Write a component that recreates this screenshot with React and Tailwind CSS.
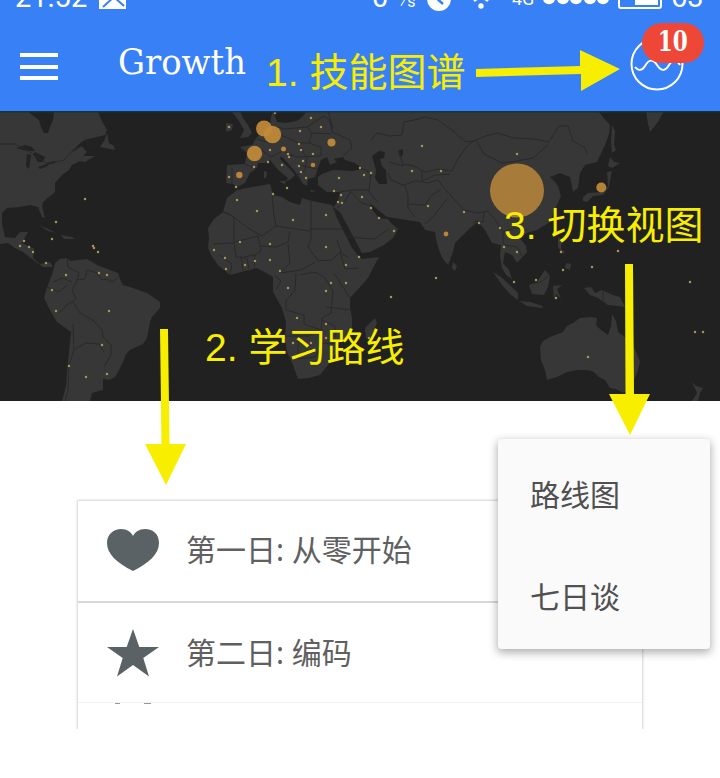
const LAND = [
  // North and Central America
  '0,111 27,111 35,117 39,120 41,127 44,133 48,133 50,127 53,120 54,111 98,111 100,117 103,123 107,130 105,135 93,138 83,141 78,145 72,152 82,146 84,149 87,152 83,156 95,156 85,162 80,161 72,165 69,170 62,175 55,183 55,192 43,202 42,206 45,218 42,217 38,207 30,205 20,207 7,208 2,213 2,224 5,237 15,238 20,232 28,232 24,239 22,243 30,247 34,248 33,258 40,264 50,262 53,267 43,267 32,259 23,252 15,248 8,243 0,244',
  // Newfoundland
  '107,133 109,143 114,146 115,150 100,147 104,141',
  // Cuba, Hispaniola
  '40,226 46,228 56,233 48,231',
  '61,235 72,237 75,239 64,239',
  // South America
  '55,263 60,259 67,258 70,261 87,259 97,265 110,270 118,273 120,279 123,285 133,288 147,293 160,302 160,308 152,317 150,322 147,338 143,344 130,350 126,354 123,362 119,370 115,377 109,380 103,379 103,390 92,393 90,401 62,401 66,386 67,372 71,332 57,322 50,310 44,298 47,287 52,275',
  // Africa
  '237,190 252,187 270,184 273,195 282,197 290,202 300,205 302,198 312,201 332,205 337,218 347,238 352,248 358,255 362,259 379,257 373,268 368,278 360,287 350,298 350,308 352,318 352,332 346,338 337,345 336,353 328,365 320,375 309,378 298,379 293,365 287,352 285,338 286,322 282,308 273,292 273,277 268,274 257,268 245,271 230,275 218,265 211,255 208,248 209,238 208,228 214,219 223,212 227,198',
  // Madagascar
  '375,318 377,323 373,332 370,338 366,339 365,328',
  // Eurasia
  '240,147 252,145 257,137 264,132 270,125 271,117 273,111 277,122 286,123 297,121 303,116 307,111 598,111 603,117 610,125 609,134 605,145 597,162 585,165 580,173 578,188 573,192 570,177 560,173 550,177 555,182 558,186 561,196 557,205 550,222 537,230 527,233 520,238 526,246 527,252 517,263 512,255 505,252 503,263 509,270 512,279 506,275 502,268 500,256 501,245 492,243 485,230 478,222 470,228 463,235 455,243 452,255 448,265 443,259 440,253 437,243 435,232 425,230 420,222 400,219 387,217 378,210 370,203 373,211 379,218 388,219 391,223 398,229 393,238 384,245 370,252 362,253 357,248 347,235 337,215 333,207 338,202 340,192 327,192 318,185 318,177 322,174 333,170 352,171 363,169 355,163 345,160 343,157 334,159 337,162 330,165 327,157 321,160 318,168 315,177 308,179 307,186 303,184 298,175 287,162 281,156 280,159 290,169 295,175 291,179 285,182 288,178 278,170 270,160 265,163 258,163 257,168 250,173 245,183 237,187 233,184 226,183 227,165 245,164 247,153',
  // British Isles
  '232,112 240,111 243,118 248,125 252,133 248,137 240,138 244,130 239,121',
  '226,123 233,124 232,130 226,132',
  // Sicily, Sardinia, Crete, Cyprus
  '279,181 286,181 285,185',
  '264,171 267,172 266,178 264,178',
  '310,190 317,191 311,192',
  // Sri Lanka
  '453,262 457,266 455,271 452,268',
  // Sumatra and Java
  '493,272 501,277 513,288 518,293 518,300 511,295 502,285',
  '519,301 530,302 543,306 542,308 527,306',
  // Borneo, Sulawesi, Philippines
  '529,285 537,282 545,270 550,276 548,287 544,295 532,294',
  '553,286 562,285 557,289 561,299 556,294 554,300',
  '558,237 562,240 561,249 565,252 563,254 558,247',
  '566,263 571,264 570,270 565,268',
  // New Guinea
  '584,288 591,287 595,293 602,290 613,295 620,297 625,307 617,306 608,305 598,298 590,295',
  // Australia
  '540,347 543,341 550,337 563,332 567,326 573,323 580,318 590,317 597,318 596,325 601,330 608,335 611,326 612,314 616,321 618,332 625,337 633,345 637,354 640,362 637,373 633,382 630,389 623,393 616,389 610,388 605,380 599,377 594,372 587,370 577,370 567,372 557,377 547,380 545,370 541,360',
  // New Zealand
  '692,382 696,386 703,388 700,393 698,401 692,401 697,393',
  // Japan
  '583,197 588,193 602,192 608,186 607,172 612,171 609,187 603,195 593,196 587,202 583,201',
  '608,166 610,157 614,162 620,163 612,168',
  '612,125 615,131 614,145 616,150 612,153 611,141',
  // Kamchatka
  '646,111 664,111 658,122 650,132 648,124',
]

const WATER = [
  // Great Lakes
  '16,148 25,145 32,147 35,151 27,151',
  '27,154 31,155 29,169 26,166',
  '35,152 45,157 43,162 38,162 33,154',
  '38,167 47,164 48,166 40,169',
  '46,163 55,161 55,163 47,165',
  // St Lawrence
  '84,140 94,138 103,137 98,147 89,150',
  // Caspian, Aral
  '372,156 379,151 385,152 384,158 380,159 382,166 386,170 387,184 379,184 375,178 376,170',
  '398,151 403,149 403,155 400,157',
  // Red Sea
  '333,207 340,212 361,251 357,255 351,243',
]

const BORDERS = [
  'M0 144L15 144L27 150L40 159L48 164L64 160L74 149L80 147',
  'M67 258L68 267L79 273L77 281L72 290L76 299L67 305L59 313',
  'M76 280L85 279L87 270L97 273L102 280L107 279L112 282L118 278',
  'M73 302L80 313L94 321L102 330L103 337L111 345L111 355L104 367',
  'M73 324L74 350L69 365L68 390L65 401M75 349L86 343L99 344L104 352',
  'M47 287L59 292L67 285M53 282L62 278L72 282',
  'M223 212L228 213L248 228L262 236L276 226L310 231',
  'M223 212L234 217L234 243L213 244M235 242L258 236M272 195L274 216L276 226',
  'M311 201L311 238L308 248M310 229L343 229M337 240L342 254L349 258',
  'M258 236L261 251L255 255L254 269M234 243L236 257L246 258M244 257L255 255',
  'M260 246L276 247L288 242L290 231M288 244L290 263L280 273L301 270L315 262',
  'M308 247L318 261L332 260L340 252M340 252L345 269L359 268M334 273L350 298',
  'M296 273L295 290L286 301L286 310L304 315L304 324L321 330L322 318L331 313L333 291L325 278L315 272L300 275',
  'M326 307L352 310M322 320L335 326L335 337M285 336L309 336L315 331M298 338L298 359L315 357L323 343L337 344',
  'M230 275L232 264L220 255M243 271L241 256M249 269L247 258M275 276L281 281L276 290',
  'M245 164L256 169M232 168L232 183M256 146L263 151L271 157L283 151L293 155',
  'M273 126L285 129L307 127L312 133L309 143L298 143L286 137L276 134L270 143L257 139',
  'M309 143L321 147L321 156M300 147L307 158L305 170L296 176M287 154L297 157L320 156M299 165L317 169',
  'M307 127L324 116L330 121L332 132L350 140L352 148L343 156M312 133L331 134M328 111L333 128',
  'M363 169L371 173L369 192L378 202M340 192L352 190L369 190M351 191L344 203L337 208M350 191L362 203L371 206M347 237L374 239L389 229',
  'M371 140L377 133L390 136L402 135L404 122L414 120L425 117L438 120L453 131L466 142L474 141L485 136L497 133L514 138L534 139L549 142L559 126L568 126L573 141L585 148L587 154',
  'M388 173L391 180L405 186L408 195L408 208L415 217M399 150L403 166L389 162M403 164L414 166L425 172L438 169L452 171L458 159L466 147L475 140',
  'M404 185L415 181L428 183L438 180L444 188L454 199L464 210L477 213L488 211L496 221L503 232L503 243L509 247',
  'M409 204L425 205L431 196L441 189M425 224L432 218L439 209L447 199M422 170L422 181L435 175L450 174',
  'M476 140L484 154L502 163L517 161L533 158L548 145M484 212L483 222L475 221L475 230M503 232L515 228L527 230M507 245L517 247L522 256',
  'M531 284L541 282L548 276M603 290L603 301',
]

const DOTS = [
  [85,199],[56,222],[52,239],[24,241],[20,246],[29,247],[33,252],[46,263],[66,275],[52,290],[56,311],[109,311],[99,273],[107,275],[102,345],[69,366],[86,377],[107,374],[93,246],[94,248],[98,252],
  [229,127],[275,113],[311,118],[300,131],[321,127],[299,144],[301,150],[313,154],[288,154],[289,157],[303,161],[299,166],[301,172],[306,178],[270,150],[268,162],[254,167],[229,177],[236,187],[282,165],[287,188],[273,194],[339,178],[334,191],[341,195],[338,202],[342,203],[360,168],[364,175],[371,173],[362,197],[371,208],[379,218],[326,215],[257,211],[293,220],[237,200],[240,242],[270,244],[270,260],[214,250],[225,258],[226,269],[245,265],[255,261],[280,271],[288,288],[326,247],[346,265],[359,257],[331,283],[346,283],[326,291],[297,318],[326,324],[326,338],[293,343],[311,343],[369,338],
  [422,146],[412,171],[441,171],[428,206],[464,212],[479,223],[500,228],[504,247],[517,252],[514,282],[536,280],[436,278],[391,297],[394,231],[517,154],
  [561,252],[592,267],[618,251],[556,298],[588,357],[690,282],[695,332],[703,332],[563,270],
]

const BUBBLES = [
  [264, 128.5, 8], [272.5, 134.5, 8.7], [254.5, 153.5, 7.7], [331.5, 142.5, 4], [239.3, 175, 3.2], [283.5, 149, 2.5], [313, 165, 2.3], [446, 234, 2.4], [601.3, 187.5, 5],
]

function WorldMap() {
  return (
    <svg className="block h-[290px] w-full shrink-0" viewBox="0 111 720 290">
      <rect x="0" y="111" width="720" height="290" fill="#212121" />
      <g fill="#373737">
        {LAND.map((p) => <polygon key={p} points={p} />)}
      </g>
      <g fill="#222">
        {WATER.map((p) => <polygon key={p} points={p} />)}
      </g>
      <g fill="none" stroke="#292929" strokeWidth="1" strokeLinejoin="round">
        {BORDERS.map((d) => <path key={d} d={d} />)}
      </g>
      <g fill="#a8935a">
        {DOTS.map(([x, y], i) => <circle key={i} cx={x} cy={y} r="1.25" />)}
      </g>
      <g fill="#c28b38">
        {BUBBLES.map(([x, y, r], i) => <circle key={i} cx={x} cy={y} r={r} fillOpacity="0.93" />)}
      </g>
      <circle cx="517" cy="190.5" r="27" fill="#a77b39" />
      <rect x="0" y="111" width="720" height="1.5" fill="#1c323d" />
    </svg>
  )
}

function StatusBar() {
  return (
    <div className="relative h-[12px] overflow-hidden font-[Roboto,sans-serif] text-white">
      <span className="absolute bottom-[-2px] left-[15px] text-[29px] leading-[34px]">21:52</span>
      <svg className="absolute inset-0" width="720" height="12" viewBox="0 0 720 12">
        <path d="M99 -14H126V9H99Z" fill="#fff" />
        <path d="M103 7L116 -5M114 -3L124 6" stroke="#3880f5" strokeWidth="2" fill="none" />
        <circle cx="439" cy="-1" r="12" fill="#fff" />
        <path d="M434 -4L443 4" stroke="#3880f5" strokeWidth="2.5" />
        <circle cx="481" cy="6" r="2.7" fill="#fff" />
        <path d="M474 1Q481 -5 488 1" stroke="#fff" strokeWidth="2.5" fill="none" />
        <g fill="#fff">
          <circle cx="549" cy="-2" r="6.2" /><circle cx="563" cy="-2" r="6.2" /><circle cx="576" cy="-2" r="6.2" /><circle cx="590" cy="-2" r="6.2" /><circle cx="603" cy="-2" r="6.2" />
        </g>
        <rect x="619" y="-15" width="42" height="23" rx="2" fill="none" stroke="#fff" strokeWidth="2" />
        <rect x="635" y="-12" width="23" height="17" fill="#fff" />
      </svg>
      <span className="absolute bottom-[-2px] left-[372px] text-[29px] leading-[34px]">0</span>
      <span className="absolute bottom-[0px] left-[400px] text-[16px] leading-[20px]">⁄s</span>
      <span className="absolute bottom-[2px] left-[512px] text-[18px] leading-[22px]">4G</span>
      <span className="absolute bottom-[-2px] left-[671px] text-[29px] leading-[34px]">63</span>
    </div>
  )
}

function SkillIcon() {
  return (
    <div className="relative h-[56px] w-[56px]">
      <svg className="block h-full w-full" viewBox="0 0 56 56" fill="none" stroke="#fff" strokeWidth="2">
        <circle cx="28" cy="28" r="25.5" />
        <path d="M6 31C9 35 13 35 16 30C20 23 24 23 28 29C32 35 36 36 40 29C44 23 47 23 51 29" />
      </svg>
      <span className="absolute top-[-13px] left-[13px] flex h-[40px] w-[62px] items-center justify-center rounded-full bg-[#ef4737] pb-[2px] text-white">
        <span className="inline-block scale-x-[.8] font-['DejaVu_Serif',serif] text-[27px] font-bold">10</span>
      </span>
    </div>
  )
}

function Header() {
  return (
    <header className="h-[111px] bg-[#3880f5]">
      <StatusBar />
      <div className="flex h-[99px] items-start pt-[24px] pl-[20px]">
        <div className="mt-[17px] flex w-[38px] flex-col gap-[7.5px]">
          <span className="h-[4px] bg-white" />
          <span className="h-[4px] bg-white" />
          <span className="h-[4px] bg-white" />
        </div>
        <h1 className="ml-[60px] w-[511px] origin-left scale-x-[.94] font-['DejaVu_Serif',serif] text-[36px] leading-[52px] text-white">Growth</h1>
        <SkillIcon />
      </div>
    </header>
  )
}

function DayRow({ label, children }) {
  return (
    <li className="flex h-[102px] items-center border-b-2 border-[#d8d8d8] pl-[28px] last:border-b-0">
      <svg className="h-[54px] w-[54px] shrink-0" viewBox="0 0 54 54" fill="#5a6266">{children}</svg>
      <span className="-mt-[2px] ml-[26px] text-[30px] leading-[40px] text-[#606060]">{label}</span>
    </li>
  )
}

function Note({ number, text, className }) {
  return (
    <p className={'absolute whitespace-pre text-[39px] leading-[50px] text-[#f7ee00] ' + className}>
      {number}. {text}
    </p>
  )
}

export default function App() {
  return (
    <div className="relative flex h-[778px] w-[720px] flex-col overflow-hidden bg-white font-['Liberation_Sans','Noto_Sans_CJK_SC',sans-serif]">
      <Header />
      <WorldMap />

      <main className="flex flex-1 flex-col pt-[100px] pl-[78px]">
        <div className="h-[228px] w-[564px] overflow-hidden bg-white shadow-[0_0_2px_1px_#d4d4d4] [clip-path:inset(-4px_-4px_0_-4px)]">
          <ul className="h-[201px] font-['Noto_Sans','Noto_Sans_CJK_SC',sans-serif]">
            <DayRow label="第一日: 从零开始">
              <path d="M27 47C11 39 1 30 1 19C1 10 8 5 15 5C21 5 25 8 27 12C29 8 33 5 39 5C47 5 53 10 53 19C53 30 43 39 27 47Z" />
            </DayRow>
            <DayRow label="第二日: 编码">
              <path d="M27 2L33.3 20H53L37.3 31L43 49.500L27 38L11 49.500L16.7 31L1 20H20.7Z" />
            </DayRow>
          </ul>
          <svg className="block h-[3px] w-full" viewBox="0 0 564 3">
            <path d="M0 .5H564" stroke="#f2f2f2" />
            <path d="M37 1.500H42M66 1.500H73" stroke="#999" />
          </svg>
        </div>
      </main>

      <div className="absolute top-[439px] left-[498px] flex h-[210px] w-[212px] flex-col rounded-[4px] bg-[#fafafa] pt-[3px] pl-[32px] font-['Noto_Sans_CJK_SC',sans-serif] text-[30px] text-[#505050] shadow-[0_3px_8px_1px_rgba(0,0,0,.3)]">
        <span className="flex h-[102px] items-center">路线图</span>
        <span className="flex h-[102px] items-center">七日谈</span>
      </div>

      <Note number="1" text="技能图谱" className="top-[48px] left-[266px]" />
      <Note number="2" text="学习路线" className="top-[323px] left-[205px]" />
      <Note number="3" text="切换视图" className="top-[201px] left-[504px]" />

      <svg className="pointer-events-none absolute inset-0" width="720" height="778" viewBox="0 0 720 778" fill="#f7ee00">
        <path d="M476 69L580 66V50L620 69L581 91V74L476 77Z" />
        <path d="M160 329H168L169.500 444H186L166 485L145 444H161.500Z" />
        <path d="M625 264H633L634 394H650L630 435L609 394H625.500Z" />
      </svg>
    </div>
  )
}
